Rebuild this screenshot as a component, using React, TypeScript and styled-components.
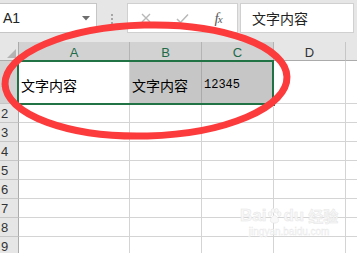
import React from 'react';
import styled, { createGlobalStyle } from 'styled-components';

const GlobalStyle = createGlobalStyle`
  html, body {
    margin: 0;
    padding: 0;
    background: #ffffff;
  }
  body {
    font-family: 'Liberation Sans', 'Noto Sans CJK SC', sans-serif;
  }
`;

const GREEN = '#217346';

const columns = [
  { name: 'A', width: 111, selected: true },
  { name: 'B', width: 72, selected: true },
  { name: 'C', width: 72, selected: true },
  { name: 'D', width: 72, selected: false },
  { name: '', width: 72, selected: false },
];

const rows = [1, 2, 3, 4, 5, 6, 7, 8, 9];

const firstRow: { text: string; kind: 'cjk' | 'num'; state: 'active' | 'range' }[] = [
  { text: '文字内容', kind: 'cjk', state: 'active' },
  { text: '文字内容', kind: 'cjk', state: 'range' },
  { text: '12345', kind: 'num', state: 'range' },
];

const Window = styled.div`
  position: relative;
  width: 357px;
  height: 253px;
  overflow: hidden;
  background: #ffffff;
`;

const FormulaBar = styled.div`
  display: flex;
  align-items: flex-start;
  height: 42px;
  padding-top: 3px;
  box-sizing: border-box;
  background: #e6e6e6;
`;

const NameBox = styled.div`
  display: flex;
  align-items: center;
  justify-content: space-between;
  width: 97px;
  height: 30px;
  padding: 0 6px 0 3px;
  box-sizing: border-box;
  background: #ffffff;
  border: 1px solid #c6c6c6;
  border-left: none;
  font-size: 14px;
  color: #222;
`;

const Splitter = styled.div`
  display: flex;
  flex-direction: column;
  align-items: center;
  gap: 2px;
  width: 30px;
  padding-top: 11px;
`;

const Dot = styled.span`
  width: 2px;
  height: 2px;
  background: #a6a6a6;
`;

const ButtonStrip = styled.div`
  display: flex;
  align-items: center;
  gap: 16px;
  width: 111px;
  height: 30px;
  padding-left: 8px;
  box-sizing: border-box;
  background: #ffffff;
  border: 1px solid #d0d0d0;
`;

const StripButton = styled.span`
  display: flex;
  align-items: center;
  justify-content: center;
  width: 20px;
  height: 20px;
`;

const Fx = styled.span`
  font-family: 'Liberation Serif', serif;
  font-style: italic;
  font-size: 15px;
  color: #5a5a5a;
  letter-spacing: -1px;

  small {
    font-size: 11px;
  }
`;

const FormulaInput = styled.div`
  display: flex;
  align-items: center;
  width: 114px;
  height: 30px;
  margin-left: 2px;
  padding-left: 11px;
  box-sizing: border-box;
  background: #ffffff;
  border: 1px solid #d0d0d0;
  font-family: 'Noto Sans CJK SC', sans-serif;
  font-size: 14px;
  color: #222;
`;

const Grid = styled.div`
  position: relative;
  display: grid;
  grid-template-columns: 19px ${columns.map((c) => `${c.width}px`).join(' ')};
  grid-template-rows: 19px 43px repeat(8, 19px);
`;

const Corner = styled.div`
  display: flex;
  align-items: flex-end;
  justify-content: flex-end;
  padding: 0 2px 2px 0;
  box-sizing: border-box;
  background: #e6e6e6;
  border-right: 1px solid #ababab;
  border-bottom: 1px solid #ababab;
`;

const ColHeader = styled.div<{ $selected?: boolean }>`
  display: flex;
  align-items: center;
  justify-content: center;
  box-sizing: border-box;
  background: ${(p) => (p.$selected ? '#d2d2d2' : '#e6e6e6')};
  border-right: 1px solid ${(p) => (p.$selected ? '#b4b4b4' : '#c6c6c6')};
  border-bottom: 1px solid #ababab;
  color: ${(p) => (p.$selected ? '#1e6b4a' : '#333')};
  font-size: 13px;
  padding-top: 2px;
`;

const RowHeader = styled.div<{ $selected?: boolean }>`
  display: flex;
  align-items: center;
  padding-left: 1px;
  box-sizing: border-box;
  background: ${(p) => (p.$selected ? '#d2d2d2' : '#e6e6e6')};
  border-right: 1px solid #ababab;
  border-bottom: 1px solid #c6c6c6;
  color: ${(p) => (p.$selected ? '#1e6b4a' : '#333')};
  font-size: 13px;
`;

const Cell = styled.div<{ $range?: boolean; $kind?: 'cjk' | 'num' }>`
  display: flex;
  align-items: center;
  padding: ${(p) => (p.$kind === 'num' ? '5px 0 0 2px' : '6px 0 0 2px')};
  box-sizing: border-box;
  overflow: hidden;
  white-space: nowrap;
  background: ${(p) => (p.$range ? '#c6c6c6' : '#ffffff')};
  border-right: 1px solid ${(p) => (p.$range ? '#aaaaaa' : '#d4d4d4')};
  border-bottom: 1px solid #d4d4d4;
  color: #000;
  line-height: 1;
  font-family: ${(p) =>
    p.$kind === 'num' ? "'Liberation Mono', monospace" : "'Noto Sans CJK SC', sans-serif"};
  font-size: ${(p) => (p.$kind === 'num' ? '12px' : '14px')};
`;

const Selection = styled.div`
  position: absolute;
  left: 17px;
  top: 18px;
  width: 257px;
  height: 45px;
  box-sizing: border-box;
  border: 2px solid ${GREEN};
  pointer-events: none;
`;

const FillHandle = styled.span`
  position: absolute;
  right: -4px;
  bottom: -4px;
  width: 5px;
  height: 5px;
  background: ${GREEN};
  border: 1px solid #ffffff;
`;

const Annotation = styled.svg`
  position: absolute;
  left: 0;
  top: 0;
  pointer-events: none;
`;

const Watermark = styled.div`
  position: absolute;
  left: 240px;
  top: 207px;
  display: flex;
  flex-direction: column;
  align-items: center;
  color: #f8f8f8;
  -webkit-text-stroke: 0.5px #e6e6e6;
  pointer-events: none;
`;

const MarkTitle = styled.div`
  display: flex;
  align-items: center;
  gap: 1px;
  font-family: 'Liberation Sans', sans-serif;
  font-weight: bold;
  font-size: 17px;
  line-height: 1;

  span.cn {
    font-family: 'Noto Sans CJK SC', sans-serif;
    font-size: 15px;
    margin-left: 3px;
  }
`;

const MarkUrl = styled.div`
  margin-top: 3px;
  font-family: 'Liberation Sans', sans-serif;
  font-size: 10px;
  line-height: 1;
  -webkit-text-stroke: 0.3px #e6e6e6;
`;

const CrossIcon = () => (
  <svg width="10" height="10" viewBox="0 0 10 10">
    <path d="M1 1 L9 9 M9 1 L1 9" stroke="#b8b8b8" strokeWidth="1.4" fill="none" />
  </svg>
);

const CheckIcon = () => (
  <svg width="13" height="11" viewBox="0 0 13 11">
    <path d="M1 6 L4.5 9.5 L12 1.5" stroke="#b8b8b8" strokeWidth="1.5" fill="none" />
  </svg>
);

const Paw = () => (
  <svg width="15" height="16" viewBox="0 0 15 16">
    <g fill="#f8f8f8" stroke="#e6e6e6" strokeWidth="0.7">
      <ellipse cx="3" cy="6" rx="1.8" ry="2.3" />
      <ellipse cx="6" cy="2.8" rx="1.8" ry="2.3" />
      <ellipse cx="9.5" cy="2.8" rx="1.8" ry="2.3" />
      <ellipse cx="12.3" cy="6" rx="1.8" ry="2.3" />
      <path d="M7.5 7 C4 9 2.5 12 4 14 C5.5 15.5 9.5 15.5 11 14 C12.5 12 11 9 7.5 7 Z" />
    </g>
  </svg>
);

export default function App() {
  return (
    <Window>
      <GlobalStyle />
      <FormulaBar>
        <NameBox>
          <span>A1</span>
          <svg width="8" height="5" viewBox="0 0 8 5">
            <path d="M0 0 L8 0 L4 4.5 Z" fill="#6e6e6e" />
          </svg>
        </NameBox>
        <Splitter>
          <Dot />
          <Dot />
          <Dot />
        </Splitter>
        <ButtonStrip>
          <StripButton>
            <CrossIcon />
          </StripButton>
          <StripButton>
            <CheckIcon />
          </StripButton>
          <StripButton>
            <Fx>
              f<small>x</small>
            </Fx>
          </StripButton>
        </ButtonStrip>
        <FormulaInput>文字内容</FormulaInput>
      </FormulaBar>

      <Grid>
        <Corner>
          <svg width="9" height="9" viewBox="0 0 9 9">
            <path d="M9 0 L9 9 L0 9 Z" fill="#b4b4b4" />
          </svg>
        </Corner>
        {columns.map((c, i) => (
          <ColHeader key={i} $selected={c.selected}>
            {c.name}
          </ColHeader>
        ))}
        {rows.map((r) => (
          <React.Fragment key={r}>
            <RowHeader $selected={r === 1}>{r}</RowHeader>
            {columns.map((c, i) => {
              const data = r === 1 ? firstRow[i] : undefined;
              return (
                <Cell key={i} $range={data?.state === 'range'} $kind={data?.kind}>
                  {data?.text}
                </Cell>
              );
            })}
          </React.Fragment>
        ))}
        <Selection>
          <FillHandle />
        </Selection>
      </Grid>

      <Watermark>
        <MarkTitle>
          <span>Bai</span>
          <Paw />
          <span>du</span>
          <span className="cn">经验</span>
        </MarkTitle>
        <MarkUrl>jingyan.baidu.com</MarkUrl>
      </Watermark>

      <Annotation width="357" height="253" viewBox="0 0 357 253">
        <ellipse
          cx="146"
          cy="80.5"
          rx="141"
          ry="55.5"
          transform="rotate(-1.5 146 80.5)"
          fill="none"
          stroke="#fc3b3d"
          strokeWidth="7"
        />
      </Annotation>
    </Window>
  );
}
